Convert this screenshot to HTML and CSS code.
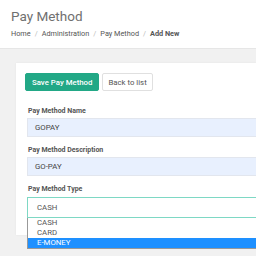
FILE: index.html
```html
<!DOCTYPE html>
<html>
<head>
<meta charset="utf-8">
<link rel="stylesheet" href="styles.css">
</head>
<body>
<header class="page-header">
  <h1 class="title">Pay Method</h1>
  <nav class="crumbs">
    <span>Home</span><span class="sep">/</span><span>Administration</span><span class="sep">/</span><span>Pay Method</span><span class="sep">/</span><span class="current">Add New</span>
  </nav>
</header>
<main class="content">
  <section class="card">
    <div class="actions">
      <button class="btn btn-primary">Save Pay Method</button>
      <button class="btn btn-default">Back to list</button>
    </div>
    <div class="field">
      <label class="label">Pay Method Name</label>
      <div class="input filled">GOPAY</div>
    </div>
    <div class="field">
      <label class="label">Pay Method Description</label>
      <div class="input filled">GO-PAY</div>
    </div>
    <div class="field last">
      <label class="label">Pay Method Type</label>
      <div class="select-wrap">
        <div class="input select">CASH</div>
        <ul class="options">
          <li>CASH</li>
          <li>CARD</li>
          <li class="active">E-MONEY</li>
        </ul>
      </div>
    </div>
  </section>
</main>
</body>
</html>
```
FILE: styles.css
```css
* { box-sizing: border-box; }
html, body { margin: 0; padding: 0; }
body {
  width: 256px;
  height: 256px;
  overflow: hidden;
  background: #f1f1f1;
  font-family: Roboto, "Liberation Sans", sans-serif;
  color: #555;
}
.page-header {
  background: #fff;
  height: 49px;
  border-bottom: 1px solid #e6e6e6;
  padding: 7px 11px 0;
}
.title {
  margin: 0;
  font-weight: 400;
  font-size: 13.5px;
  line-height: 18px;
  color: #707070;
}
.crumbs {
  margin-top: 4px;
  font-size: 7.3px;
  line-height: 10px;
  color: #555;
}
.crumbs .sep { color: #bbb; margin: 0 4px; }
.crumbs .current { font-weight: 700; color: #555; }
.content { padding: 14px 0 0 16px; }
.card {
  background: #fff;
  height: 172px;
  padding: 10px 0 0 9px;
  box-shadow: 0 0 2px rgba(0,0,0,0.06);
}
.actions { display: flex; gap: 3px; }
.btn {
  font-family: Roboto, "Liberation Sans", sans-serif;
  font-size: 7.8px;
  height: 18px;
  padding: 0 5px;
  border-radius: 2px;
  border: 1px solid #e0e0e0;
  background: #fff;
  color: #555;
}
.btn-primary {
  background: #22a886;
  border-color: #22a886;
  color: #fff;
  font-weight: 500;
  padding: 0 6px;
}
.field { margin-top: 15px; padding-left: 2px; }
.field + .field { margin-top: 8px; }
.label {
  display: block;
  font-size: 7px;
  font-weight: 700;
  color: #555;
  line-height: 10px;
  margin-left: 1px;
}
.input {
  margin-top: 2px;
  height: 19px;
  line-height: 18px;
  font-size: 7.8px;
  padding-left: 7px;
  color: #444;
  border: 1px solid #e2e6ee;
  border-right: 0;
}
.filled { background: #e8f0fe; }
.select-wrap { position: relative; margin-top: 3px; }
.select {
  margin-top: 0;
  height: 21px;
  line-height: 19px;
  background: #fff;
  border: 1px solid #7ed8c4;
  border-right: 0;
  padding-left: 9px;
  color: #555;
}
.options {
  position: absolute;
  left: 0;
  right: 0;
  top: 100%;
  margin: 0;
  padding: 0;
  list-style: none;
  background: #fff;
  border: 1px solid #999;
  border-top: 0;
  border-right: 0;
  font-size: 7.8px;
  line-height: 10px;
  color: #555;
  z-index: 2;
}
.options li { padding-left: 9px; }
.options li.active { background: #1e90ff; color: #fff; }
```
